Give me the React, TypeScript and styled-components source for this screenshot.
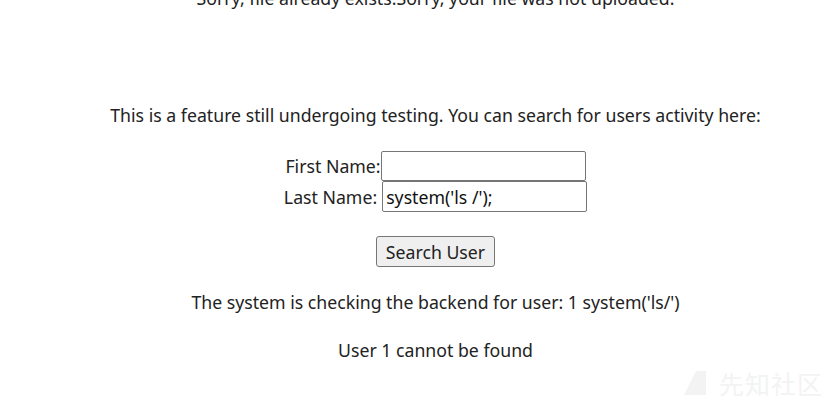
import {FC} from 'react'
import styled, {createGlobalStyle} from 'styled-components'

const GlobalStyle = createGlobalStyle`
  html, body {
    margin: 0;
    padding: 0;
    background: #fff;
    overflow: hidden;
  }
  body {
    font-family: "Noto Sans", "Open Sans", sans-serif;
    color: #222;
  }
`

const Page = styled.div`
  position: relative;
  width: 839px;
  height: 404px;
  overflow: hidden;
  display: flex;
  flex-direction: column;
  align-items: center;
  padding-left: 32px;
  box-sizing: border-box;
  font-size: 17.7px;
  line-height: 24px;
`

const Line = styled.p<{$top: number}>`
  margin: ${p => p.$top}px 0 0;
  text-align: center;
  white-space: nowrap;
`

const Form = styled.form`
  margin-top: 24px;
  display: flex;
  flex-direction: column;
  align-items: center;
`

const Row = styled.label`
  display: flex;
  align-items: center;
  white-space: nowrap;
`

const Input = styled.input<{$shift: number; $h: number}>`
  width: 205px;
  height: ${p => p.$h}px;
  box-sizing: border-box;
  margin-left: ${p => p.$shift}px;
  border: 1px solid #767676;
  border-radius: 2px;
  padding: 1px 3px;
  font: inherit;
  color: #111;
`

const Button = styled.button`
  margin-top: 24px;
  height: 31px;
  padding: 0 9px;
  font: inherit;
  color: #222;
  background: #efefef;
  border: 1px solid #767676;
  border-radius: 3px;
`

const Watermark = styled.div`
  position: absolute;
  right: 16px;
  bottom: 8px;
  display: flex;
  align-items: center;
  gap: 12px;
  color: #f3f3f3;
  font-family: "Noto Sans CJK SC", sans-serif;
  font-size: 25px;
  letter-spacing: 1px;
`

const App: FC = () => (
  <>
    <GlobalStyle />
    <Page>
      <Line $top={-14}>Sorry, file already exists.Sorry, your file was not uploaded.</Line>
      <Line $top={93}>
        This is a feature still undergoing testing. You can search for users activity here:
      </Line>
      <Form onSubmit={e => e.preventDefault()}>
        <Row>
          First Name:
          <Input $shift={0} $h={30} type="text" defaultValue="" />
        </Row>
        <Row>
          Last Name:
          <Input $shift={5} $h={31} type="text" defaultValue="system('ls /');" />
        </Row>
        <Button type="submit">Search User</Button>
      </Form>
      <Line $top={23}>The system is checking the backend for user: 1 system('ls/')</Line>
      <Line $top={24}>User 1 cannot be found</Line>
      <Watermark>
        <svg width="24" height="26" viewBox="0 0 24 26">
          <path d="M1 25 L13 1 L23 1 L23 25 Z" fill="#f3f3f3" />
        </svg>
        先知社区
      </Watermark>
    </Page>
  </>
)

export default App
